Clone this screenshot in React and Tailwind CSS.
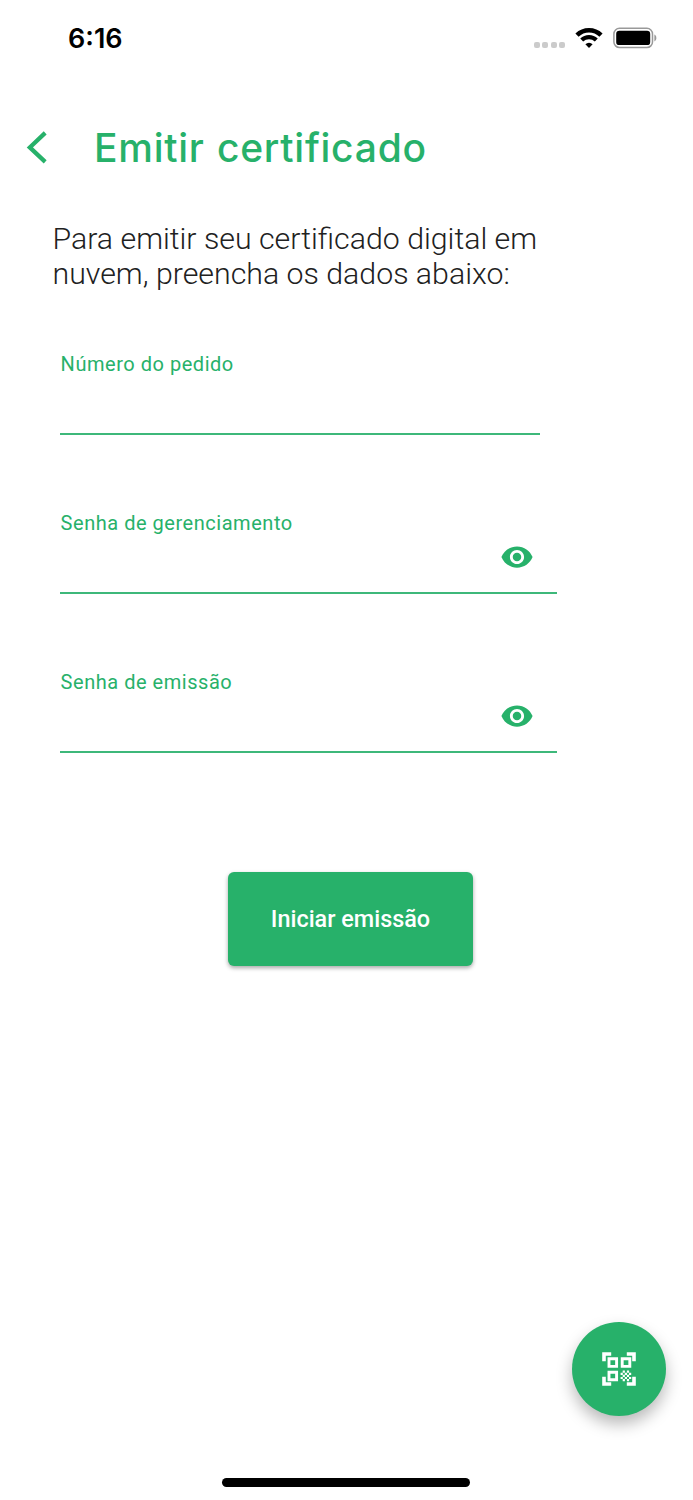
import { useState } from "react"
import { MdVisibility, MdVisibilityOff } from "react-icons/md"

function StatusBar() {
    return (
        <div className="flex h-[76px] items-center justify-between pr-[36px] pl-[68px]">
            <span className="font-['Inter',sans-serif] text-[27px] leading-none font-semibold text-black">
                6:16
            </span>
            <div className="flex items-center">
                {/* No signal dots */}
                <div className="mt-[14px] flex gap-[2.4px]">
                    <span className="h-[6px] w-[6px] rounded-[2px] bg-[#cbcbcb]" />
                    <span className="h-[6px] w-[6px] rounded-[2px] bg-[#cbcbcb]" />
                    <span className="h-[6px] w-[6px] rounded-[2px] bg-[#cbcbcb]" />
                    <span className="h-[6px] w-[6px] rounded-[2px] bg-[#cbcbcb]" />
                </div>
                {/* Wifi */}
                <svg className="ml-[10px] h-[20px] w-[28px]" viewBox="0 0 28 20" fill="none">
                    <path d="M2 7.2a17.2 17.2 0 0 1 24 0" stroke="#000" strokeWidth="4.6" />
                    <path d="M6.7 12.1a10.5 10.5 0 0 1 14.6 0" stroke="#000" strokeWidth="4.2" />
                    <path d="M14 20l-3.6-3.7a5 5 0 0 1 7.2 0z" fill="#000" />
                </svg>
                {/* Battery */}
                <svg className="ml-[10px] h-[22px] w-[44px]" viewBox="0 0 44 22">
                    <rect x="0.9" y="1.3" width="38.6" height="19.2" rx="5.6" fill="none" stroke="#999" strokeWidth="1.5" />
                    <rect x="3.2" y="3.8" width="34" height="14.3" rx="3.2" fill="#000" />
                    <path d="M41.4 7.6c2.6 1.2 2.6 5.6 0 6.8z" fill="#999" />
                </svg>
            </div>
        </div>
    )
}

function QrIcon() {
    return (
        <svg className="h-[42px] w-[42px]" viewBox="0 0 42 42" fill="none">
            {/* Corners */}
            <path
                d="M6 13.2V6h7.2M28.8 6H36v7.2M36 28.8V36h-7.2M13.2 36H6v-7.2"
                stroke="currentColor"
                strokeWidth="3.6"
            />
            {/* Finder squares */}
            <path
                d="M11 10.8h7.6v7.6H11zM24.2 10.8h7.6v7.6h-7.6zM11 24.2h7.6v7.6H11z"
                stroke="currentColor"
                strokeWidth="2.9"
            />
            {/* Checker */}
            <path
                d="M24.7 23.7h6.4M22.6 25.8h10.6M24.7 27.9h6.4M22.6 30h10.6M24.7 32.1h6.4"
                stroke="currentColor"
                strokeWidth="2.2"
                strokeDasharray="2.2 2"
            />
        </svg>
    )
}

function Field({ label, password = false }) {
    const [visible, setVisible] = useState(false)
    const Icon = visible ? MdVisibilityOff : MdVisibility

    return (
        <label
            className={`flex h-[84px] flex-col border-b-2 border-[#3db87a] ${
                password ? "w-[497px]" : "w-[480px]"
            }`}
        >
            <span className="mt-px ml-[0.6px] text-[20px] leading-[24px] tracking-[0.53px] whitespace-nowrap">
                {label}
            </span>
            <span className="flex flex-1 items-center">
                <input
                    type={password && !visible ? "password" : "text"}
                    className="h-[34px] min-w-0 flex-1 bg-transparent text-[27px] text-[#212121] outline-none"
                />
                {password && (
                    <button
                        type="button"
                        className="mr-[23px] -mt-[13px]"
                        onClick={() => setVisible(!visible)}
                    >
                        <Icon className="h-[34px] w-[34px]" />
                    </button>
                )}
            </span>
        </label>
    )
}

export default function App() {
    return (
        <div className="flex h-[1500px] w-[693px] flex-col overflow-hidden bg-white font-['Roboto',sans-serif] text-[#27b16a]">
            <StatusBar />

            {/* Header */}
            <header className="mt-[41px] flex h-[60px] items-center pl-[26px]">
                <button type="button">
                    <svg className="h-[34px] w-[22px]" viewBox="0 0 22 34" fill="none">
                        <path d="M19.2 2.9L3.8 17.4l15.4 14.5" stroke="currentColor" strokeWidth="4.2" />
                    </svg>
                </button>
                <h1 className="ml-[46px] font-['Inter',sans-serif] text-[39px] leading-none font-medium tracking-[0.74px] [word-spacing:1.2px] whitespace-nowrap">
                    Emitir certificado
                </h1>
            </header>

            <p className="mt-[44px] ml-[52.5px] text-[30.3px] leading-[35px] font-light whitespace-nowrap text-[#212121]">
                Para emitir seu certificado digital em
                <br />
                nuvem, preencha os dados abaixo:
            </p>

            <form className="mt-[60px] flex flex-col gap-[75px] pl-[60px]">
                <Field label="Número do pedido" />
                <Field label="Senha de gerenciamento" password />
                <Field label="Senha de emissão" password />
            </form>

            <button
                type="button"
                className="mt-[119px] ml-[228px] h-[94px] w-[245px] shrink-0 rounded-[6px] bg-[#27b16a] pt-[2px] text-[23.4px] font-medium text-white shadow-[0_2px_4px_rgba(0,0,0,0.35)]"
            >
                Iniciar emissão
            </button>

            {/* Scan button */}
            <button
                type="button"
                className="mt-auto mr-[27px] mb-[62px] flex h-[94px] w-[94px] shrink-0 items-center justify-center self-end rounded-full bg-[#27b16a] text-white shadow-[0_8px_16px_rgba(0,0,0,0.28)]"
            >
                <QrIcon />
            </button>

            {/* Home indicator */}
            <div className="mb-[13.5px] ml-[222px] h-[8.5px] w-[248px] shrink-0 rounded-full bg-black" />
        </div>
    )
}
